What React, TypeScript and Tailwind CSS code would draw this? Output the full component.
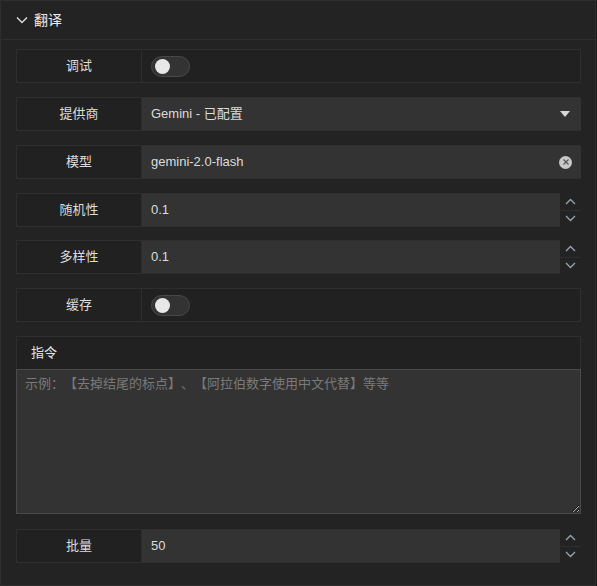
import { useState } from "react";

const font = { fontFamily: '"Liberation Sans", "Noto Sans CJK SC", sans-serif' };

const Chevron = ({ up }: { up?: boolean }) => (
  <svg width="11" height="7" viewBox="0 0 11 7" fill="none" stroke="#9aa4b0" strokeWidth="1.3">
    {up ? <path d="M1 6 L5.5 1.5 L10 6" /> : <path d="M1 1 L5.5 5.5 L10 1" />}
  </svg>
);

const Toggle = ({ on, onClick }: { on: boolean; onClick: () => void }) => (
  <button
    onClick={onClick}
    className="relative w-[39px] h-[21px] rounded-full bg-[#333] border border-[#484848]"
  >
    <span
      className={`absolute top-[2px] w-[15px] h-[15px] rounded-full bg-[#e8e8e8] ${on ? "left-[20px]" : "left-[3px]"}`}
    />
  </button>
);

const Label = ({ text }: { text: string }) => (
  <div className="w-[125px] shrink-0 flex items-center justify-center text-[13px] text-[#dcdcdc] border-r border-[#2e2e2e]">
    {text}
  </div>
);

const NumberRow = ({ label, value }: { label: string; value: string }) => (
  <div className="flex h-[34px]">
    <div className="flex flex-1 border border-[#2e2e2e] border-r-0 bg-[#212121]">
      <Label text={label} />
      <div className="flex-1 bg-[#333] flex items-center px-[9px] text-[13px] text-[#dcdcdc]">{value}</div>
    </div>
    <div className="w-[21px] flex flex-col">
      <div className="flex-1 flex items-center justify-center border-b border-[#2e2e2e]">
        <Chevron up />
      </div>
      <div className="flex-1 flex items-center justify-center">
        <Chevron />
      </div>
    </div>
  </div>
);

export default function App() {
  const [debug, setDebug] = useState(false);
  const [cache, setCache] = useState(false);

  return (
    <div className="w-[597px] h-[586px] bg-[#1c1c1c]" style={font}>
      <div className="w-[596px] h-[586px] bg-[#232323] border border-[#2e2e2e] flex flex-col">
        <div className="h-[39px] shrink-0 flex items-center gap-[6px] pl-[15px] border-b border-[#2e2e2e]">
          <svg width="12" height="8" viewBox="0 0 12 8" fill="none" stroke="#dcdcdc" strokeWidth="1.4">
            <path d="M1 1.5 L6 6.5 L11 1.5" />
          </svg>
          <span className="text-[14px] text-[#ececec]">翻译</span>
        </div>

        <div className="flex flex-col gap-[14px] pt-[9px] pl-[15px] pr-[14px]">
          <div className="flex h-[34px] border border-[#2e2e2e] bg-[#212121]">
            <Label text="调试" />
            <div className="flex-1 flex items-center px-[9px]">
              <Toggle on={debug} onClick={() => setDebug(!debug)} />
            </div>
          </div>

          <div className="flex h-[34px] border border-[#2e2e2e] border-r-0 bg-[#212121]">
            <Label text="提供商" />
            <div className="flex-1 bg-[#333] flex items-center justify-between px-[9px] text-[13px] text-[#dcdcdc]">
              <span>Gemini - 已配置</span>
              <svg width="10" height="6" viewBox="0 0 10 6" className="mr-[2px]">
                <path d="M0 0 H10 L5 6 Z" fill="#d8d8d8" />
              </svg>
            </div>
          </div>

          <div className="flex h-[34px] border border-[#2e2e2e] border-r-0 bg-[#212121]">
            <Label text="模型" />
            <div className="flex-1 bg-[#333] flex items-center justify-between px-[9px] text-[13px] text-[#dcdcdc]">
              <span>gemini-2.0-flash</span>
              <span className="w-[13px] h-[13px] rounded-full bg-[#c8c8c8] flex items-center justify-center">
                <svg width="6" height="6" viewBox="0 0 6 6" stroke="#555" strokeWidth="1.2">
                  <path d="M0.5 0.5 L5.5 5.5 M5.5 0.5 L0.5 5.5" />
                </svg>
              </span>
            </div>
          </div>

          <NumberRow label="随机性" value="0.1" />
          <div className="-mt-px">
            <NumberRow label="多样性" value="0.1" />
          </div>

          <div className="flex h-[34px] border border-[#2e2e2e] bg-[#212121]">
            <Label text="缓存" />
            <div className="flex-1 flex items-center px-[9px]">
              <Toggle on={cache} onClick={() => setCache(!cache)} />
            </div>
          </div>

          <div className="flex flex-col h-[178px] border border-[#2e2e2e] bg-[#212121]">
            <div className="h-[32px] shrink-0 flex items-center pl-[14px] text-[13px] text-[#e6e6e6]">指令</div>
            <textarea
              className="flex-1 bg-[#333] border border-[#4a4a4a] -mx-px -mb-px px-[8px] py-[4px] text-[13px] text-[#dcdcdc] placeholder:text-[#7a7a7a] outline-none [text-spacing-trim:space-all]"
              placeholder="示例：【去掉结尾的标点】、【阿拉伯数字使用中文代替】等等"
            />
          </div>

          <div className="mt-px">
            <NumberRow label="批量" value="50" />
          </div>
        </div>
      </div>
    </div>
  );
}
